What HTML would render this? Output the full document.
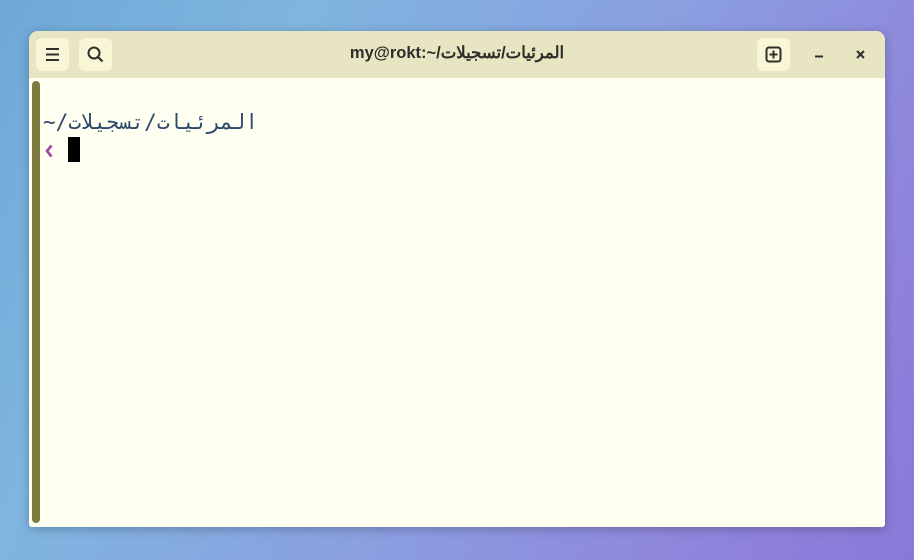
<!DOCTYPE html>
<html><head><meta charset="utf-8"><style>
html,body{margin:0;width:914px;height:560px;overflow:hidden}
body{background:linear-gradient(120deg,#6fa8d8 0%,#7fb6e0 25%,#8a9fe0 55%,#8f86dc 80%,#8a78d8 100%);position:relative;font-family:"Liberation Sans","Noto Sans CJK SC",sans-serif}
.win{position:absolute;left:29px;top:31px;width:856px;height:496px;border-radius:9px 9px 3px 3px;overflow:hidden;background:#fffff2;box-shadow:0 2px 10px rgba(0,0,0,.25)}
.tb{position:absolute;left:0;top:0;width:856px;height:47px;background:#e7e5c2}
.btn{position:absolute;top:7px;width:33px;height:33px;border-radius:6px;background:#f8f6d6}
.title{position:absolute;left:0;right:0;top:12px;text-align:center;font-weight:bold;font-size:16.5px;color:#2e2e2a}
.sb{position:absolute;left:3px;top:50px;width:8px;height:442px;background:#7d7a3e;border-radius:4px}
.term{position:absolute;left:14px;top:79px;font-family:"DejaVu Sans Mono",monospace;font-size:21px;color:#2d4a6a;white-space:pre}
.a{unicode-bidi:isolate;direction:rtl;display:inline-block}
</style></head><body>
<div class="win">
<div class="tb">
 <div class="btn" style="left:7px"><svg width="33" height="33"><path d="M10 11h13M10 16.5h13M10 22h13" stroke="#2e2e2a" stroke-width="2"/></svg></div>
 <div class="btn" style="left:50px"><svg width="33" height="33"><circle cx="15" cy="15" r="5.5" fill="none" stroke="#2e2e2a" stroke-width="2"/><path d="M19 19l4.5 4.5" stroke="#2e2e2a" stroke-width="2.2"/></svg></div>
 <div class="title" dir="ltr">my@rokt:~/<span class="a">تسجيلات</span>/<span class="a">المرئيات</span></div>
 <div class="btn" style="left:728px"><svg width="33" height="33"><rect x="9.5" y="9.5" width="14" height="14" rx="2.5" fill="none" stroke="#2e2e2a" stroke-width="2"/><path d="M16.5 12.5v8M12.5 16.5h8" stroke="#2e2e2a" stroke-width="2"/></svg></div>
 <svg style="position:absolute;left:782px;top:16px" width="16" height="16"><path d="M4 9.5h8" stroke="#2e2e2a" stroke-width="2"/></svg>
 <svg style="position:absolute;left:824px;top:16px" width="16" height="16"><path d="M4 4l7 7M11 4l-7 7" stroke="#2e2e2a" stroke-width="2"/></svg>
</div>
<div class="sb"></div>
<div class="term" dir="ltr">~/<span class="a">تسجيلات</span>/<span class="a">المرئيات</span></div>
<svg style="position:absolute;left:14px;top:111px" width="12" height="18"><path d="M8.5 3.5L4 9l4.5 5.5" fill="none" stroke="#a04898" stroke-width="2.6"/></svg>
<div style="position:absolute;left:39px;top:106px;width:12px;height:25px;background:#000"></div>
</div>
</body></html>
